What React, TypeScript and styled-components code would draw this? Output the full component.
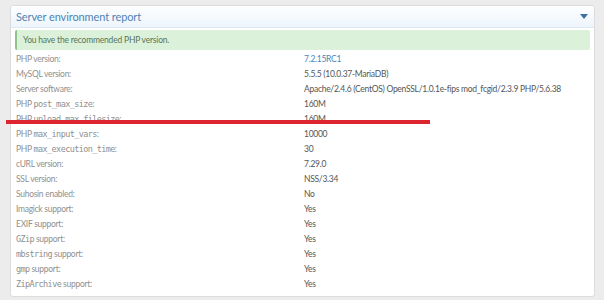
import styled, { createGlobalStyle } from 'styled-components';

const GlobalStyle = createGlobalStyle`
  html, body {
    margin: 0;
    padding: 0;
    background: #ececec;
    font-family: Lato, "Open Sans", sans-serif;
  }
`;

const Page = styled.div`
  position: relative;
  width: 604px;
  height: 300px;
  padding: 5px 9px 0 10px;
  box-sizing: border-box;
`;

const Block = styled.div`
  background: #fff;
  border: 1px solid #dcdcdc;
  border-radius: 3px;
  overflow: hidden;
`;

const Header = styled.div`
  display: flex;
  align-items: center;
  justify-content: space-between;
  height: 21px;
  padding: 0 6px 0 5px;
  background: linear-gradient(to bottom, #fdfeff, #edf5fc);
  border-bottom: 1px solid #dde8f2;
`;

const Title = styled.h2`
  margin: 0;
  font-size: 11px;
  font-weight: 400;
  letter-spacing: -0.1px;
  color: #4f84b4;
`;

const Caret = styled.span`
  width: 0;
  height: 0;
  border-left: 4px solid transparent;
  border-right: 4px solid transparent;
  border-top: 5px solid #3d6fa0;
`;

const Body = styled.div`
  padding: 2px 4px 5px 4px;
`;

const Message = styled.div`
  display: flex;
  align-items: center;
  height: 20px;
  padding-left: 6px;
  margin-bottom: 1px;
  background: #dcf1da;
  border-left: 2px solid #8ec48b;
  border-radius: 2px;
  font-size: 8.5px;
  letter-spacing: -0.2px;
  color: #587558;
`;

const Rows = styled.dl`
  margin: 0;
  padding: 0 0 0 1px;
`;

const Row = styled.div`
  display: grid;
  grid-template-columns: 288px 1fr;
  height: 15px;
  align-items: center;
  font-size: 8.5px;
  letter-spacing: -0.28px;
`;

const Label = styled.dt`
  color: #8f8f8f;
  white-space: nowrap;
`;

const Value = styled.dd<{ $link?: boolean }>`
  margin: 0;
  color: ${({ $link }) => ($link ? '#4a86b8' : '#555')};
  white-space: nowrap;
`;

const Code = styled.code`
  font-family: "DejaVu Sans Mono", "Liberation Mono", monospace;
  font-size: 8.5px;
  letter-spacing: -0.6px;
`;

const Strike = styled.div`
  position: absolute;
  left: 6px;
  top: 120px;
  width: 424px;
  height: 4px;
  background: #dd2530;
`;

type Item = { label: React.ReactNode; value: string; link?: boolean };

const items: Item[] = [
  { label: 'PHP version:', value: '7.2.15RC1', link: true },
  { label: 'MySQL version:', value: '5.5.5 (10.0.37-MariaDB)' },
  {
    label: 'Server software:',
    value: 'Apache/2.4.6 (CentOS) OpenSSL/1.0.1e-fips mod_fcgid/2.3.9 PHP/5.6.38',
  },
  { label: <>PHP <Code>post_max_size</Code>:</>, value: '160M' },
  { label: <>PHP <Code>upload_max_filesize</Code>:</>, value: '160M' },
  { label: <>PHP <Code>max_input_vars</Code>:</>, value: '10000' },
  { label: <>PHP <Code>max_execution_time</Code>:</>, value: '30' },
  { label: 'cURL version:', value: '7.29.0' },
  { label: 'SSL version:', value: 'NSS/3.34' },
  { label: 'Suhosin enabled:', value: 'No' },
  { label: 'Imagick support:', value: 'Yes' },
  { label: 'EXIF support:', value: 'Yes' },
  { label: <><Code>GZip</Code> support:</>, value: 'Yes' },
  { label: <><Code>mbstring</Code> support:</>, value: 'Yes' },
  { label: <><Code>gmp</Code> support:</>, value: 'Yes' },
  { label: <><Code>ZipArchive</Code> support:</>, value: 'Yes' },
];

export default function App() {
  return (
    <Page>
      <GlobalStyle />
      <Block>
        <Header>
          <Title>Server environment report</Title>
          <Caret />
        </Header>
        <Body>
          <Message>You have the recommended PHP version.</Message>
          <Rows>
            {items.map((item, i) => (
              <Row key={i}>
                <Label>{item.label}</Label>
                <Value $link={item.link}>{item.value}</Value>
              </Row>
            ))}
          </Rows>
        </Body>
      </Block>
      <Strike />
    </Page>
  );
}
